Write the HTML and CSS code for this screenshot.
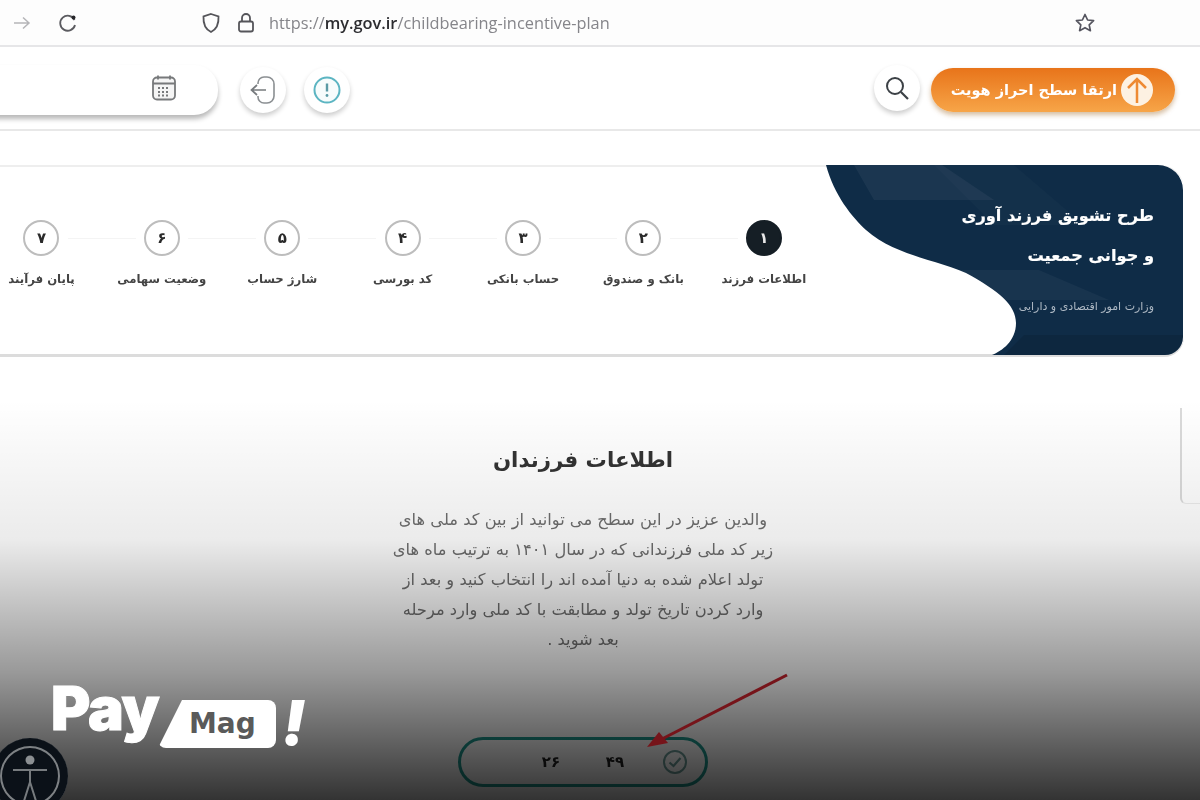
FILE: index.html
```html
<!DOCTYPE html>
<html lang="fa" dir="rtl">
<head>
    <meta charset="UTF-8">
    <meta name="viewport" content="width=device-width, initial-scale=1.0">
    <title>طرح تشویق فرزند آوری</title>
    <link rel="stylesheet" href="styles.css">
</head>
<body>
    <div class="page">
        <div class="browser-bar" dir="ltr">
            <svg class="nav-icon forward" width="20" height="16" viewBox="0 0 20 16"><path d="M2 8h15M11 2.500l6 5.500-6 5.500" fill="none" stroke="#b5b5b8" stroke-width="1.500"/></svg>
            <svg class="nav-icon reload" width="22" height="22" viewBox="0 0 22 22"><path d="M17.500 8A7.500 7.500 0 1 0 18 13" fill="none" stroke="#5b5b60" stroke-width="1.800"/><circle cx="16.500" cy="5.500" r="2" fill="#26262a"/></svg>
            <svg class="nav-icon shield" width="20" height="22" viewBox="0 0 20 22"><path d="M10 2l7.500 2.500c.4 7-1.500 12.500-7.500 15.500C4 17 2.100 11.500 2.500 4.500z" fill="none" stroke="#55555a" stroke-width="1.800"/></svg>
            <svg class="nav-icon lock" width="18" height="22" viewBox="0 0 18 22"><rect x="2" y="9.500" width="14" height="10" rx="2" fill="none" stroke="#55555a" stroke-width="1.800"/><path d="M5 9.500V6a4 4 0 0 1 8 0v3.500" fill="none" stroke="#55555a" stroke-width="1.800"/></svg>
            <span class="url">https://<b>my.gov.ir</b>/childbearing-incentive-plan</span>
            <svg class="nav-icon star" width="22" height="22" viewBox="0 0 22 22"><path d="M11 2.500l2.600 5.500 6 .7-4.400 4.100 1.200 5.900-5.400-3-5.400 3 1.200-5.900-4.400-4.100 6-.7z" fill="none" stroke="#55555f" stroke-width="1.700" stroke-linejoin="round"/></svg>
        </div>

        <header class="site-header">
            <button class="upgrade-btn">
                <svg width="32" height="32" viewBox="0 0 32 32"><circle cx="16" cy="16" r="16" fill="#fdf1e2"/><path d="M16 29V5M7 14l9-9 9 9" fill="none" stroke="#ee8a33" stroke-width="2.500"/></svg>
                <span>ارتقا سطح احراز هویت</span>
            </button>
            <div class="round-btn search-btn">
                <svg width="28" height="28" viewBox="0 0 28 28"><circle cx="12" cy="12" r="8" fill="none" stroke="#3c4146" stroke-width="2"/><path d="M18 18l7 7" stroke="#3c4146" stroke-width="2.200"/></svg>
            </div>
            <div class="header-left">
                <div class="round-btn">
                    <svg width="30" height="30" viewBox="0 0 30 30"><circle cx="15" cy="15" r="12.500" fill="#f7fcfc" stroke="#5cb5c2" stroke-width="2"/><path d="M15 8.500v8" stroke="#5a9aa5" stroke-width="2.400"/><circle cx="15" cy="20.500" r="1.400" fill="#5a9aa5"/></svg>
                </div>
                <div class="round-btn">
                    <svg width="30" height="30" viewBox="0 0 30 30"><path d="M10 9V8a6 6 0 0 1 6-6h3a7 7 0 0 1 7 7v12a7 7 0 0 1-7 7h-3a6 6 0 0 1-6-6v-1" fill="none" stroke="#8b8f92" stroke-width="1.600"/><path d="M18 15H4M9 10l-5.500 5L9 20" fill="none" stroke="#777b7e" stroke-width="1.700"/></svg>
                </div>
                <div class="date-box">
                    <svg class="date-icon" width="26" height="28" viewBox="0 0 26 28"><rect x="2" y="3.500" width="22" height="22" rx="4" fill="#f5f5f5" stroke="#77797b" stroke-width="1.800"/><path d="M2 9.500h22M7 1.500v4M19 1.500v4" stroke="#77797b" stroke-width="1.800"/><path d="M7 14h12M7 18h12M7 21.500h12" stroke="#77797b" stroke-width="2" stroke-dasharray="2 2"/></svg>
                </div>
            </div>
        </header>

        <section class="banner">
            <div class="banner-title">
                <svg class="banner-wave" width="360" height="190" viewBox="0 0 360 190">
                    <path d="M2 0H334A25 25 0 0 1 359 25V172A18 18 0 0 1 341 190H168C178 186 192 176 192 158C192 140 175 126 142 108C110 94 70 90 42 65C28 52 10 30 2 0Z" fill="#0f2c47"/>
                    <path d="M30 0H118L170 35H50Z" fill="#fff" opacity=".05"/>
                    <path d="M110 0H190L260 60H170Z" fill="#fff" opacity=".02"/>
                    <path d="M125 105H215L285 135H180Z" fill="#fff" opacity=".04"/>
                    <path d="M200 170H359V172A18 18 0 0 1 341 190H180Z" fill="#000" opacity=".1"/>
                </svg>
                <h1>طرح تشویق فرزند آوری<br>و جوانی جمعیت</h1>
                <p>وزارت امور اقتصادی و دارایی</p>
            </div>
            <ol class="stepper">
                <li class="step active"><span class="step-num">۱</span><span class="step-label">اطلاعات فرزند</span></li>
                <li class="step"><span class="step-num">۲</span><span class="step-label">بانک و صندوق</span></li>
                <li class="step"><span class="step-num">۳</span><span class="step-label">حساب بانکی</span></li>
                <li class="step"><span class="step-num">۴</span><span class="step-label">کد بورسی</span></li>
                <li class="step"><span class="step-num">۵</span><span class="step-label">شارژ حساب</span></li>
                <li class="step"><span class="step-num">۶</span><span class="step-label">وضعیت سهامی</span></li>
                <li class="step"><span class="step-num">۷</span><span class="step-label">پایان فرآیند</span></li>
            </ol>
        </section>

        <main class="content">
            <h2>اطلاعات فرزندان</h2>
            <p class="intro">
                والدین عزیز در این سطح می توانید از بین کد ملی های<br>
                زیر کد ملی فرزندانی که در سال ۱۴۰۱ به ترتیب ماه های<br>
                تولد اعلام شده به دنیا آمده اند را انتخاب کنید و بعد از<br>
                وارد کردن تاریخ تولد و مطابقت با کد ملی وارد مرحله<br>
                بعد شوید .
            </p>
            <div class="id-pill">
                <svg width="26" height="26" viewBox="0 0 26 26"><circle cx="13" cy="13" r="11" fill="none" stroke="#6fa09c" stroke-width="2"/><path d="M7.500 13.500l4 3.500 7-8" fill="none" stroke="#6fa09c" stroke-width="2.200"/></svg>
                <span class="id-part">۴۹</span>
                <span class="id-part">۲۶</span>
            </div>
        </main>

        <div class="side-tab"></div>
    </div>

    <!-- dark fade + watermark sit on top of the screenshot -->
    <div class="fade"></div>
    <svg class="arrow" width="150" height="80" viewBox="0 0 150 80">
        <path d="M145 3L18 68" stroke="#76141a" stroke-width="3"/>
        <path d="M5 75L17 60L26 71Z" fill="#76141a"/>
    </svg>
    <div class="logo" dir="ltr">
        <span class="logo-pay">Pay</span>
        <span class="logo-mag">Mag</span>
        <span class="logo-bang">!</span>
    </div>
    <div class="a11y">
        <svg width="36" height="46" viewBox="0 0 36 46"><circle cx="18" cy="5" r="4.500" fill="#8b8f92"/><path d="M1 15h34M18 15v14M18 27l-6 19M18 27l6 19" fill="none" stroke="#777b7e" stroke-width="2"/></svg>
    </div>
</body>
</html>
```
FILE: styles.css
```css
* {
    box-sizing: border-box;
}
html, body {
    margin: 0;
    height: 800px;
    overflow: hidden;
}
body {
    position: relative;
    background-color: #fff;
    font-family: "DejaVu Sans", sans-serif;
    color: #333;
}
.page {
    height: 800px;
    filter: blur(0.5px);
}

/* browser chrome */
.browser-bar {
    display: flex;
    align-items: center;
    height: 47px;
    padding-left: 12px;
    background-color: #fdfdfd;
    border-bottom: 2px solid #e6e6e8;
}
.nav-icon {
    flex: none;
}
.reload {
    margin-left: 25px;
}
.shield {
    margin-left: 122px;
}
.lock {
    margin-left: 16px;
}
.url {
    margin-left: 14px;
    font-family: "Open Sans", sans-serif;
    font-size: 16.350px;
    color: #85858a;
}
.url b {
    font-weight: 600;
    color: #2c2c30;
}
.star {
    margin-left: 464px;
}

/* header */
.site-header {
    display: flex;
    align-items: center;
    height: 84px;
    padding: 3px 25px 0 0;
    border-bottom: 2px solid #e8e8e8;
}
.upgrade-btn {
    display: flex;
    flex: none;
    align-items: center;
    gap: 4px;
    width: 244px;
    height: 44px;
    padding: 0 22px 0 7px;
    border: none;
    border-radius: 22px;
    background: linear-gradient(#e8741a, #f7a548);
    box-shadow: 0 3px 5px rgba(150, 90, 20, 0.4);
    color: #fff;
    font-family: "DejaVu Sans", sans-serif;
    font-size: 14.500px;
    font-weight: bold;
    white-space: nowrap;
}
.round-btn {
    display: flex;
    align-items: center;
    justify-content: center;
    flex: none;
    width: 46px;
    height: 46px;
    border-radius: 50%;
    background-color: #fff;
    box-shadow: 0 3px 5px rgba(0, 0, 0, 0.2);
}
.search-btn {
    margin: 0 11px 4px 0;
}
.header-left {
    display: flex;
    align-items: center;
    gap: 18px;
    margin-right: 524px;
}
.date-box {
    display: flex;
    align-items: center;
    flex: none;
    width: 250px;
    height: 50px;
    margin-right: 4px;
    padding-right: 41px;
    border-radius: 24px;
    background-color: #fff;
    box-shadow: 0 4px 5px rgba(0, 0, 0, 0.28);
}
.date-icon {
    margin-bottom: 4px;
}

/* banner + stepper */
.banner {
    display: flex;
    height: 192px;
    margin: 34px 16px 0 -30px;
    border-top: 2px solid #eeeeee;
    border-bottom: 3px solid #dcdcdc;
    border-radius: 0 24px 20px 0;
    background-color: #fff;
}
.banner-title {
    position: relative;
    flex: none;
    width: 360px;
    padding: 29px 30px 0 0;
    color: #fff;
}
.banner-wave {
    position: absolute;
    top: -2px;
    right: 0;
}
.banner-title h1, .banner-title p {
    position: relative;
    margin: 0;
}
.banner-title h1 {
    font-size: 16.200px;
    line-height: 40px;
    font-weight: bold;
    -webkit-text-stroke: 0.2px #fff;
}
.banner-title p {
    margin-top: 24px;
    font-size: 11px;
    color: #aeb9c4;
}
.stepper {
    display: flex;
    flex: none;
    margin: 0;
    padding: 53px 0 0;
    list-style: none;
}
.step {
    position: relative;
    display: flex;
    flex-direction: column;
    align-items: center;
    width: 120.400px;
}
.step::after {
    content: "";
    position: absolute;
    top: 18px;
    left: -34px;
    width: 68px;
    height: 1px;
    background-color: #f4f4f4;
}
.step:last-child::after {
    display: none;
}
.step-num {
    display: flex;
    align-items: center;
    justify-content: center;
    width: 36px;
    height: 36px;
    border: 2px solid #bdbdbd;
    border-radius: 50%;
    font-size: 15px;
    font-weight: bold;
    color: #2a2a2a;
}
.active .step-num {
    border-color: #151e25;
    background-color: #151e25;
    color: #e8e8e8;
}
.step-label {
    margin-top: 16px;
    font-size: 11.700px;
    font-weight: bold;
    color: #444;
    white-space: nowrap;
}

/* children section */
.content {
    display: flex;
    flex-direction: column;
    align-items: center;
    padding: 85px 34px 0 0;
}
.content h2 {
    margin: 0;
    font-size: 21.300px;
    line-height: 36px;
    color: #333;
}
.intro {
    margin: 27px 0 0;
    font-size: 16.300px;
    line-height: 30px;
    text-align: center;
    color: #6e6e6e;
    white-space: nowrap;
}
.id-pill {
    display: flex;
    align-items: center;
    width: 250px;
    height: 50px;
    margin-top: 82px;
    padding-right: 17px;
    border: 3px solid #1f9a90;
    border-radius: 25px;
}
.id-pill svg {
    margin-left: 15px;
}
.id-part {
    width: 64px;
    font-size: 15px;
    font-weight: bold;
    text-align: center;
    color: #222;
}
.side-tab {
    position: absolute;
    top: 408px;
    right: 0;
    width: 20px;
    height: 96px;
    border-left: 2px solid #dadada;
    border-bottom: 1px solid #ececec;
    border-radius: 0 0 0 6px;
    background-color: #fff;
}

/* overlays */
.fade {
    position: absolute;
    top: 400px;
    left: 0;
    width: 100%;
    height: 400px;
    background: linear-gradient(rgba(0, 0, 0, 0), rgba(0, 0, 0, 0.08) 35%, rgba(0, 0, 0, 0.4) 68%, rgba(0, 0, 0, 0.8));
}
.arrow {
    position: absolute;
    top: 672px;
    left: 642px;
}
.logo {
    position: absolute;
    top: 680px;
    left: 50px;
    width: 262px;
    height: 72px;
    color: #fff;
}
.logo-pay {
    position: absolute;
    top: -8px;
    left: 1px;
    font-family: Inter, sans-serif;
    font-size: 60px;
    font-weight: 900;
    letter-spacing: -1px;
    -webkit-text-stroke: 1px #fff;
}
.logo-mag {
    position: absolute;
    top: 20px;
    left: 108px;
    display: block;
    width: 118px;
    height: 48px;
    padding: 8px 0 0 31px;
    border-radius: 8px;
    background-color: #fff;
    clip-path: polygon(24px 0, 100% 0, 100% 100%, 0 100%);
    font-family: "DejaVu Sans", sans-serif;
    font-size: 28px;
    font-weight: bold;
    line-height: 32px;
    color: #5a5a5a;
}
.logo-bang {
    position: absolute;
    top: 5px;
    left: 232px;
    font-family: Inter, sans-serif;
    font-size: 62px;
    font-style: italic;
    font-weight: 900;
}
.a11y {
    position: absolute;
    top: 738px;
    left: -8px;
    display: flex;
    justify-content: center;
    width: 76px;
    height: 76px;
    padding-top: 17px;
    border-radius: 50%;
    background-color: #0b1118;
    box-shadow: inset 0 0 0 8px #0b1118, inset 0 0 0 10px #7d8184;
}
```
